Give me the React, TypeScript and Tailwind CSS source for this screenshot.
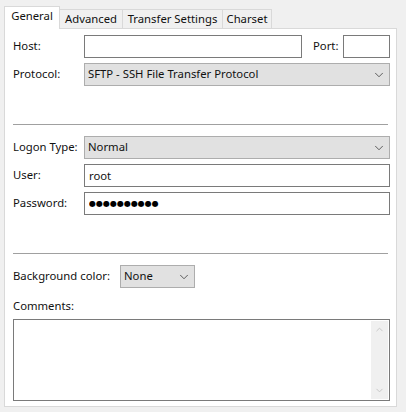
import { ChevronDown, ChevronUp } from 'lucide-react'

const FONT = "font-['Noto_Sans','Open_Sans',sans-serif]"

const TABS = [
  { label: 'Advanced', width: 'w-[64px]' },
  { label: 'Transfer Settings', width: 'w-[101px]' },
  { label: 'Charset', width: 'w-[50px]' },
]

function Field({ value = '', className = '' }: { value?: string; className?: string }) {
  return (
    <input
      readOnly
      value={value}
      className={`h-[23px] border border-[#7a7a7a] bg-white px-[4px] text-[11.3px] text-[#111] outline-none ${className}`}
    />
  )
}

function Select({ value, className = '' }: { value: string; className?: string }) {
  return (
    <div className={`flex h-[23px] items-center justify-between border border-[#adadad] bg-[#e1e1e1] pl-[3px] pr-[3px] ${className}`}>
      <span className="text-[11.3px] text-[#111]">{value}</span>
      <ChevronDown size={14} strokeWidth={1.3} className="text-[#333]" />
    </div>
  )
}

function Row({ label, children }: { label: string; children: React.ReactNode }) {
  return (
    <div className="flex items-center">
      <span className="w-[71px] shrink-0 whitespace-nowrap text-[11.3px]">{label}</span>
      {children}
    </div>
  )
}

export default function App() {
  return (
    <div className={`h-[412px] w-[406px] overflow-hidden bg-[#f0f0f0] pl-[4px] pt-[6px] text-[#111] ${FONT}`}>
      {/* Tabs */}
      <div className="relative z-10 -mb-px flex h-[23px] items-end">
        <div className="flex h-[23px] w-[56px] justify-center border border-b-0 border-[#d9d9d9] bg-white pt-px text-[11.3px]">
          General
        </div>
        {TABS.map((t) => (
          <div
            key={t.label}
            className={`-ml-px flex h-[20px] justify-center border border-[#d9d9d9] bg-[#f0f0f0] pt-px text-[11.3px] ${t.width}`}
          >
            {t.label}
          </div>
        ))}
      </div>

      {/* Panel */}
      <div className="flex h-[379px] w-[393px] flex-col border border-[#d9d9d9] bg-white pl-[8px] pr-[6px] pt-[6px]">
        <div className="flex flex-col gap-[5px]">
          <Row label="Host:">
            <Field className="w-[218px]" />
            <span className="ml-[11px] w-[30px] text-[11.3px]">Port:</span>
            <Field className="w-[47px]" />
          </Row>
          <Row label="Protocol:">
            <Select value="SFTP - SSH File Transfer Protocol" className="w-[306px]" />
          </Row>
        </div>

        <div className="mr-[2px] mt-[38px] h-px bg-[#a0a0a0]" />

        <div className="mt-[11px] flex flex-col gap-[5px]">
          <Row label="Logon Type:">
            <Select value="Normal" className="w-[306px]" />
          </Row>
          <Row label="User:">
            <Field value="root" className="w-[306px]" />
          </Row>
          <Row label="Password:">
            <Field value="●●●●●●●●●●" className="w-[306px] font-['DejaVu_Sans',sans-serif] !text-[8px] text-black" />
          </Row>
        </div>

        <div className="mr-[2px] mt-[38px] h-px bg-[#a0a0a0]" />

        <div className="mt-[11px] flex items-center">
          <span className="w-[107px] shrink-0 whitespace-nowrap text-[11.3px]">Background color:</span>
          <Select value="None" className="w-[75px]" />
        </div>

        <span className="mt-[9px] text-[11.3px] leading-[17px]">Comments:</span>

        <div className="mt-[5px] flex h-[82px] w-[377px] justify-end border border-[#7a7a7a] bg-white p-px">
          <div className="flex w-[17px] flex-col items-center justify-between bg-[#f0f0f0] py-[3px]">
            <ChevronUp size={11} strokeWidth={2} className="text-[#c4c4c4]" />
            <ChevronDown size={11} strokeWidth={2} className="text-[#c4c4c4]" />
          </div>
        </div>
      </div>
    </div>
  )
}
